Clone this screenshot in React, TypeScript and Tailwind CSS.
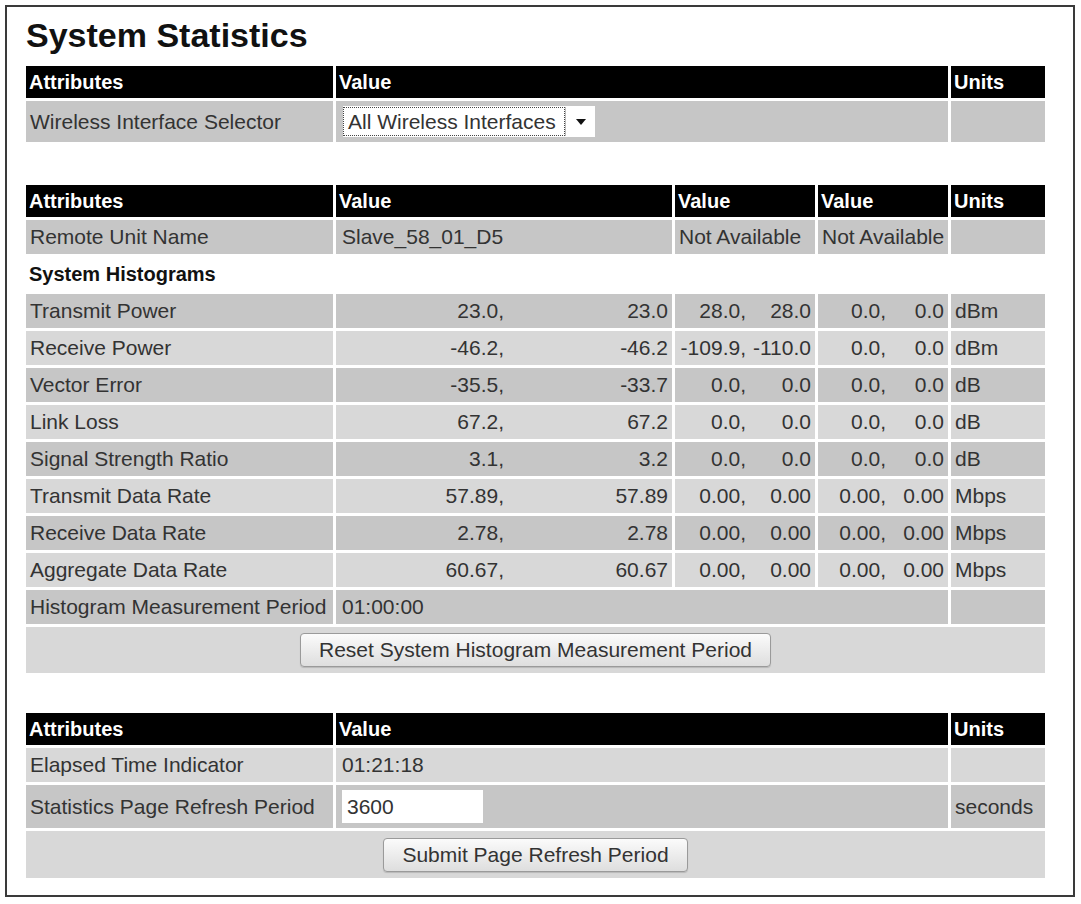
import React from "react"

const dark = "bg-[#c6c6c6]"
const light = "bg-[#d8d8d8]"

const histRows: [string, string, string, string, string, string, string, string][] = [
  ["Transmit Power", "23.0,", "23.0", "28.0,", "28.0", "0.0,", "0.0", "dBm"],
  ["Receive Power", "-46.2,", "-46.2", "-109.9,", "-110.0", "0.0,", "0.0", "dBm"],
  ["Vector Error", "-35.5,", "-33.7", "0.0,", "0.0", "0.0,", "0.0", "dB"],
  ["Link Loss", "67.2,", "67.2", "0.0,", "0.0", "0.0,", "0.0", "dB"],
  ["Signal Strength Ratio", "3.1,", "3.2", "0.0,", "0.0", "0.0,", "0.0", "dB"],
  ["Transmit Data Rate", "57.89,", "57.89", "0.00,", "0.00", "0.00,", "0.00", "Mbps"],
  ["Receive Data Rate", "2.78,", "2.78", "0.00,", "0.00", "0.00,", "0.00", "Mbps"],
  ["Aggregate Data Rate", "60.67,", "60.67", "0.00,", "0.00", "0.00,", "0.00", "Mbps"],
]

function Head({ children, span }: { children: React.ReactNode; span?: string }) {
  return (
    <div className={`flex h-[32px] items-center bg-black px-[3px] text-[20px] font-bold text-white ${span ?? ""}`}>
      {children}
    </div>
  )
}

function Cell({
  children,
  bg,
  span,
  h = "h-[34px]",
}: {
  children?: React.ReactNode
  bg: string
  span?: string
  h?: string
}) {
  return (
    <div className={`flex items-center px-[4px] whitespace-nowrap ${h} ${bg} ${span ?? ""}`}>
      {children}
    </div>
  )
}

function Pair({ a, b, w, bg }: { a: string; b: string; w: string; bg: string }) {
  return (
    <div className={`flex h-[34px] items-center whitespace-nowrap ${bg}`}>
      <span className={`text-right ${w}`}>{a}</span>
      <span className="flex-1 pr-[4px] text-right">{b}</span>
    </div>
  )
}

function Button({ children }: { children: React.ReactNode }) {
  return (
    <div className="flex h-[34px] items-center rounded-[4px] border border-[#9a9a9a] bg-gradient-to-b from-[#fbfbfb] to-[#dedede] px-[18px] text-[21px] text-[#333] shadow-[0_1px_1px_rgba(0,0,0,0.15)]">
      {children}
    </div>
  )
}

const grid = "grid grid-cols-[307px_336px_140px_130px_94px] gap-[3px]"

export default function App() {
  return (
    <div className="bg-white p-[5px] font-['Liberation_Sans',Arial,sans-serif] text-[21px] text-[#333]">
      <div className="w-[1070px] border-2 border-[#3a3a3a] px-[19px] pt-[8px] pb-[17px]">
        <div className="mb-[11px] h-[40px] text-[34px] leading-[40px] font-bold text-[#111]">
          System Statistics
        </div>

        {/* interface selector */}
        <div className={`${grid} mb-[43px]`}>
          <Head>Attributes</Head>
          <Head span="col-span-3">Value</Head>
          <Head>Units</Head>
          <Cell bg={dark} h="h-[41px]">Wireless Interface Selector</Cell>
          <Cell bg={dark} h="h-[41px]" span="col-span-3 pl-[7px]">
            <div className="flex h-[31px] w-[252px] items-center bg-white">
              <div className="flex h-[29px] w-[222px] items-center border border-dotted border-[#444] pl-[4px]">
                All Wireless Interfaces
              </div>
              <div className="flex h-[29px] flex-1 items-center justify-center border-l border-[#bbb]">
                <svg width="10" height="6" viewBox="0 0 10 6">
                  <path d="M0 0h10L5 6z" fill="#111" />
                </svg>
              </div>
            </div>
          </Cell>
          <Cell bg={dark} h="h-[41px]" />
        </div>

        {/* statistics */}
        <div className={`${grid} mb-[40px]`}>
          <Head>Attributes</Head>
          <Head>Value</Head>
          <Head>Value</Head>
          <Head>Value</Head>
          <Head>Units</Head>
          <Cell bg={dark}>Remote Unit Name</Cell>
          <Cell bg={dark} span="pl-[6px]">Slave_58_01_D5</Cell>
          <Cell bg={dark}>Not Available</Cell>
          <Cell bg={dark}>Not Available</Cell>
          <Cell bg={dark} />
          <div className="col-span-5 flex h-[34px] items-center px-[3px] text-[20px] font-bold text-[#111]">
            System Histograms
          </div>
          {histRows.map((r, i) => {
            const bg = i % 2 === 0 ? dark : light
            return (
              <React.Fragment key={r[0]}>
                <Cell bg={bg}>{r[0]}</Cell>
                <Pair a={r[1]} b={r[2]} w="w-[168px]" bg={bg} />
                <Pair a={r[3]} b={r[4]} w="w-[71px]" bg={bg} />
                <Pair a={r[5]} b={r[6]} w="w-[68px]" bg={bg} />
                <Cell bg={bg}>{r[7]}</Cell>
              </React.Fragment>
            )
          })}
          <Cell bg={dark}>Histogram Measurement Period</Cell>
          <Cell bg={dark} span="col-span-3 pl-[6px]">01:00:00</Cell>
          <Cell bg={dark} />
          <Cell bg={light} h="h-[46px]" span="col-span-5 justify-center">
            <Button>Reset System Histogram Measurement Period</Button>
          </Cell>
        </div>

        {/* refresh */}
        <div className={grid}>
          <Head>Attributes</Head>
          <Head span="col-span-3">Value</Head>
          <Head>Units</Head>
          <Cell bg={light}>Elapsed Time Indicator</Cell>
          <Cell bg={light} span="col-span-3 pl-[6px]">01:21:18</Cell>
          <Cell bg={light} />
          <Cell bg={dark} h="h-[43px]">Statistics Page Refresh Period</Cell>
          <Cell bg={dark} h="h-[43px]" span="col-span-3 pl-[6px]">
            <div className="flex h-[33px] w-[141px] items-center bg-white pl-[5px]">3600</div>
          </Cell>
          <Cell bg={dark} h="h-[43px]">seconds</Cell>
          <Cell bg={light} h="h-[47px]" span="col-span-5 justify-center">
            <Button>Submit Page Refresh Period</Button>
          </Cell>
        </div>
      </div>
    </div>
  )
}
